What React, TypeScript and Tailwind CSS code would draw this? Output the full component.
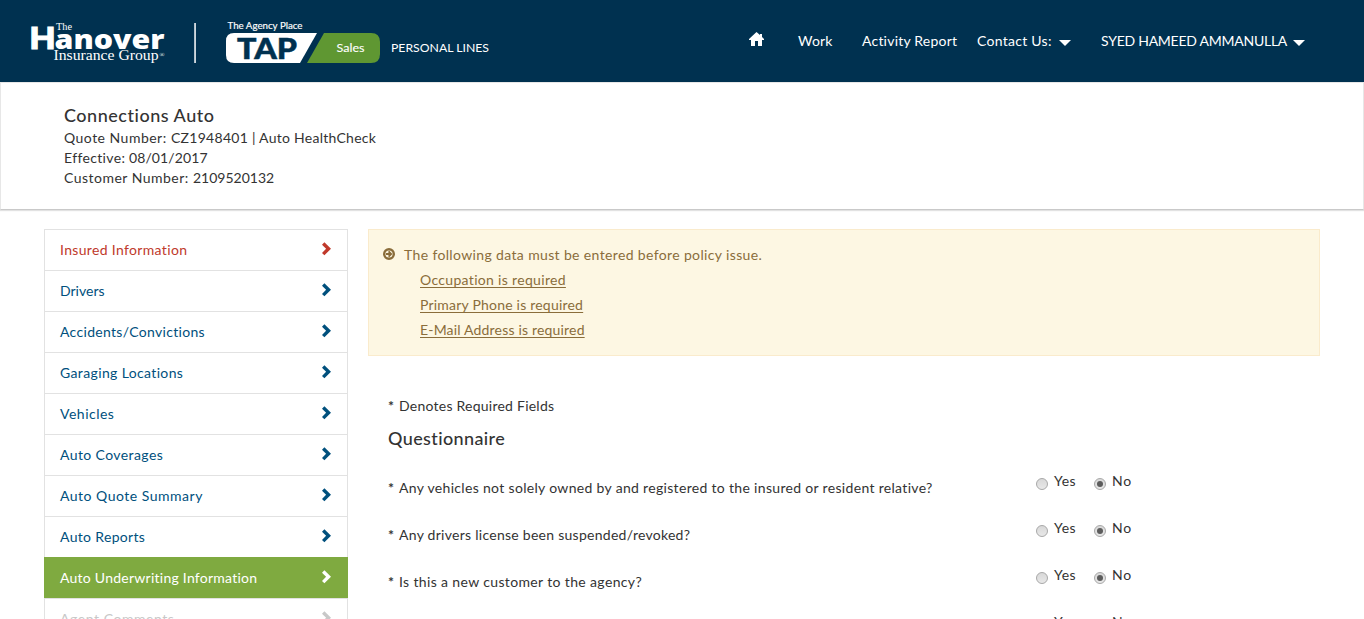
import React from 'react';

type Tone = 'alert' | 'normal' | 'active' | 'disabled';

const steps: { label: string; tone: Tone; track: string }[] = [
  { label: 'Insured Information', tone: 'alert', track: 'tracking-[0.34px]' },
  { label: 'Drivers', tone: 'normal', track: 'tracking-[0px]' },
  { label: 'Accidents/Convictions', tone: 'normal', track: 'tracking-[0.31px]' },
  { label: 'Garaging Locations', tone: 'normal', track: 'tracking-[0.36px]' },
  { label: 'Vehicles', tone: 'normal', track: 'tracking-[0.5px]' },
  { label: 'Auto Coverages', tone: 'normal', track: 'tracking-[0.4px]' },
  { label: 'Auto Quote Summary', tone: 'normal', track: 'tracking-[0.5px]' },
  { label: 'Auto Reports', tone: 'normal', track: 'tracking-[0.33px]' },
  { label: 'Auto Underwriting Information', tone: 'active', track: 'tracking-[0.25px]' },
  { label: 'Agent Comments', tone: 'disabled', track: 'tracking-[0.55px]' },
];

const toneClass: Record<Tone, string> = {
  alert: 'border-[#e2e2e2] bg-white text-[#c0392b]',
  normal: 'border-[#e2e2e2] bg-white text-[#00507d]',
  active: 'border-[#7faa40] bg-[#7faa40] text-white',
  disabled: 'border-[#e2e2e2] bg-white text-[#c8c8c8]',
};

const questions = [
  { text: 'Any vehicles not solely owned by and registered to the insured or resident relative?', track: 'tracking-[0.32px]' },
  { text: 'Any drivers license been suspended/revoked?', track: 'tracking-[0.27px]' },
  { text: 'Is this a new customer to the agency?', track: 'tracking-[0.36px]' },
  { text: '', track: '' },
];

const missing = [
  { text: 'Occupation is required', track: 'tracking-[0.32px]' },
  { text: 'Primary Phone is required', track: 'tracking-[0.21px]' },
  { text: 'E-Mail Address is required', track: 'tracking-[0.18px]' },
];

function Chevron() {
  return (
    <svg className="h-[14px] w-[9px]" viewBox="0 0 9 14" fill="currentColor">
      <path d="M2.400 .3 9 6.800 2.400 13.300 0 10.900 4.100 6.800 0 2.700Z" />
    </svg>
  );
}

function Caret() {
  return (
    <svg className="mt-[3px] h-[6px] w-[12px] shrink-0" viewBox="0 0 12 6" fill="white">
      <path d="M0 0H12L6 6Z" />
    </svg>
  );
}

function Radio({ checked }: { checked?: boolean }) {
  return (
    <span className="flex size-[12px] items-center justify-center rounded-full border border-[#a8a8a8] bg-linear-to-b from-[#d8d8d8] to-[#e8e8e8]">
      {checked && <span className="size-[6px] rounded-full bg-[#5c5c5c]" />}
    </span>
  );
}

function Star() {
  return <span className="inline-block w-[11px] font-bold">*</span>;
}

function Brand() {
  return (
    <svg className="h-[82px] w-[500px] shrink-0" viewBox="0 0 500 82" fill="white">
      <text x="56" y="30" fontFamily="Liberation Serif" fontSize="10" textLength="16" lengthAdjust="spacingAndGlyphs">The</text>
      <text x="29.500" y="48.500" fontFamily="Liberation Sans" fontWeight="700" fontSize="31" textLength="26" lengthAdjust="spacingAndGlyphs" stroke="white" strokeWidth="1">H</text>
      <text x="54.500" y="48.500" fontFamily="Open Sans" fontWeight="800" fontSize="26" textLength="110" lengthAdjust="spacingAndGlyphs">anover</text>
      <text x="53.500" y="60" fontFamily="Liberation Serif" fontSize="15" textLength="105" lengthAdjust="spacingAndGlyphs">Insurance Group</text>
      <text x="159.500" y="57" fontFamily="Liberation Serif" fontSize="6.500">®</text>
      <rect x="194.300" y="23" width="1.500" height="40" />
      <text x="227.500" y="29" fontFamily="Lato" fontSize="9" textLength="75" lengthAdjust="spacingAndGlyphs" stroke="white" strokeWidth=".15">The Agency Place</text>
      <path d="M234 33H317L300 63H234Q226 63 226 55V41Q226 33 234 33Z" />
      <path d="M324 33H371Q380 33 380 42V54Q380 63 371 63H307Z" fill="#5f9732" />
      <text x="237" y="58.800" fontFamily="Lato" fontWeight="900" fontSize="29" fill="#003150" textLength="60" lengthAdjust="spacingAndGlyphs" stroke="#003150" strokeWidth=".5">TAP</text>
      <text x="336.500" y="52" fontFamily="Lato" fontSize="11.500" textLength="28" lengthAdjust="spacingAndGlyphs" stroke="white" strokeWidth=".1">Sales</text>
      <text x="391" y="52" fontFamily="Lato" fontSize="11.500" textLength="98" lengthAdjust="spacingAndGlyphs">PERSONAL LINES</text>
    </svg>
  );
}

function Header() {
  return (
    <header className="flex h-[82px] shrink-0 justify-between bg-[#003150] text-white">
      <Brand />
      <nav className="flex h-[82px] w-[615px] items-center whitespace-nowrap leading-[20px] tracking-[0.21px]">
        <a className="w-[49px] pb-[4px]">
          <svg className="h-[14px] w-[15px]" viewBox="0 0 15 14" fill="white">
            <path d="M7.500 0 11 3V2h2v3L15 7v1h-2v6H9V9H6v5H2V8H0V7Z" />
          </svg>
        </a>
        <a className="w-[64px] tracking-[0.2px]">Work</a>
        <a className="w-[115px]">Activity Report</a>
        <a className="flex w-[124px] items-center"><span className="w-[82px] tracking-[0.28px]">Contact Us:</span><Caret /></a>
        <a className="flex items-center"><span className="w-[192px] tracking-[-0.25px]">SYED HAMEED AMMANULLA</span><Caret /></a>
      </nav>
    </header>
  );
}

export default function App() {
  return (
    <div className="flex h-[619px] w-[1364px] flex-col overflow-hidden bg-white font-['Lato',sans-serif] text-[14px] leading-[20px] text-[#333]">
      <Header />
      <section className="h-[128px] shrink-0 border border-[#e7e7e7] border-b-[#c9c9c9] pt-[20px] pl-[63px] shadow-[0_1px_1px_#e2e2e2]">
        <h1 className="pb-px text-[18px] leading-[24px] font-medium tracking-[0.52px]">Connections Auto</h1>
        <p className="tracking-[0.27px]"><span className="inline-block w-[107px] tracking-[0.48px]">Quote Number:</span>CZ1948401 | Auto HealthCheck</p>
        <p className="tracking-[0.1px]"><span className="inline-block w-[65px] tracking-[0.35px]">Effective:</span>08/01/2017</p>
        <p className="tracking-[0px]"><span className="inline-block w-[129px] tracking-[0.48px]">Customer Number:</span>2109520132</p>
      </section>
      <div className="flex gap-[20px] pt-[19px] pl-[44px]">
        <ul className="w-[304px] shrink-0">
          {steps.map((s) => (
            <li key={s.label} className={`flex h-[42px] -mb-px items-center justify-between border pr-[16px] pl-[15px] ${toneClass[s.tone]}`}>
              <span className={s.track}>{s.label}</span>
              <span className="pb-[3px]"><Chevron /></span>
            </li>
          ))}
        </ul>
        <main className="w-[952px]">
          <div className="h-[127px] border border-[#faebcc] bg-[#fdf7e3] pt-[12px] pl-[14px] leading-[25px] text-[#8a6d3b]">
            <p className="flex items-center gap-[9px]">
              <svg className="-mt-[2px] size-[12px]" viewBox="0 0 12 12" fill="none" stroke="currentColor">
                <circle cx="6" cy="6" r="4.800" strokeWidth="2.400" />
                <path d="M3 6H7.500M5.600 3.400 8.200 6 5.600 8.600" strokeWidth="1.800" />
              </svg>
              <span className="tracking-[0.36px]">The following data must be entered before policy issue.</span>
            </p>
            <ul className="pl-[37px]">
              {missing.map((m) => (
                <li key={m.text}><a className={`underline underline-offset-2 ${m.track}`}>{m.text}</a></li>
              ))}
            </ul>
          </div>
          <div className="pt-[40px] pl-[20px]">
            <p className="tracking-[0.24px]"><Star />Denotes Required Fields</p>
            <h2 className="pt-[10px] text-[18px] leading-[24px] font-medium tracking-[0.38px]">Questionnaire</h2>
            <div className="pt-[14px]">
              {questions.map((q) => (
                <div key={q.text} className="flex h-[47px]">
                  <p className="w-[648px] pt-[14px]">{q.text && <span className={q.track}><Star />{q.text}</span>}</p>
                  <label className="flex w-[58px] gap-[6px] pt-[7px] tracking-[0.5px]"><span className="pt-[7px]"><Radio /></span>Yes</label>
                  <label className="flex gap-[6px] pt-[7px] tracking-[0.9px]"><span className="pt-[7px]"><Radio checked /></span>No</label>
                </div>
              ))}
            </div>
          </div>
        </main>
      </div>
    </div>
  );
}
